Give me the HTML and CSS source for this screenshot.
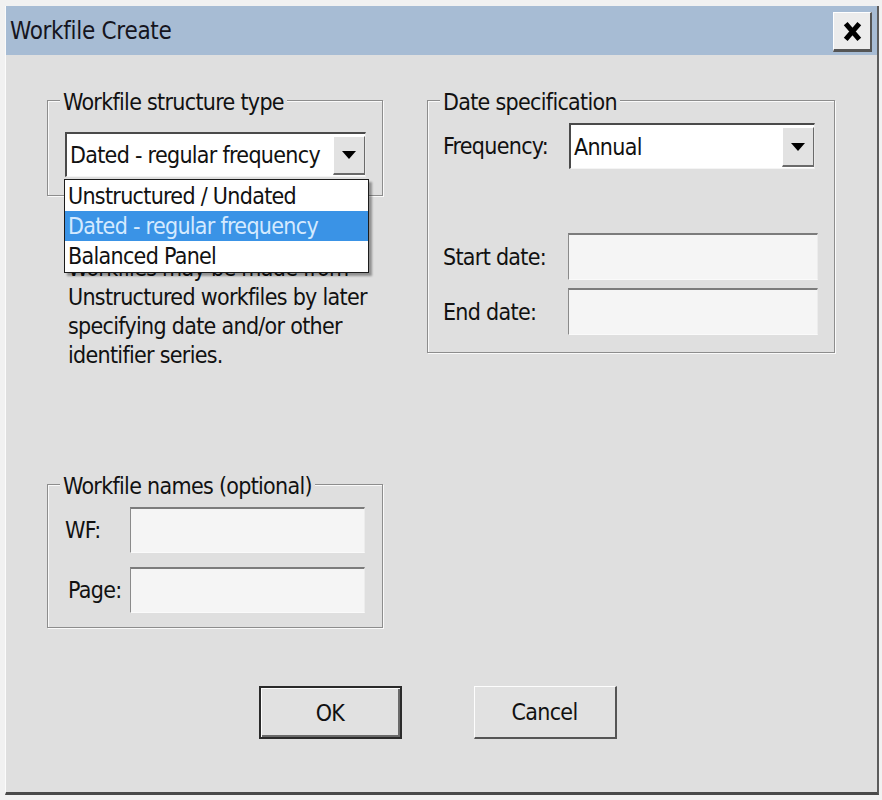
FILE: index.html
```html
<!DOCTYPE html>
<html>
<head>
<meta charset="utf-8">
<link rel="stylesheet" href="styles.css">
</head>
<body>
<div class="window">
  <div class="titlebar">
    <span class="title">Workfile Create</span>
    <div class="close"><svg viewBox="0 0 20 22" width="21" height="23"><path d="M3.5 3.5 L16.5 18.5 M16.5 3.5 L3.5 18.5" stroke="#000" stroke-width="4.8" fill="none"/></svg></div>
  </div>
  <div class="main">
    <div class="col-left">
      <div class="group g-structure">
        <div class="legend">Workfile structure type</div>
        <div class="combo-wrap">
          <div class="combo combo-structure"><span class="combo-text">Dated - regular frequency</span><span class="combo-btn"><span class="tri"></span></span></div>
          <ul class="dropdown">
            <li class="item">Unstructured / Undated</li>
            <li class="item item-selected">Dated - regular frequency</li>
            <li class="item">Balanced Panel</li>
          </ul>
        </div>
      </div>
      <div class="desc">
        <div class="desc-line">Workfiles may be made from</div>
        <div class="desc-line">Unstructured workfiles by later</div>
        <div class="desc-line">specifying date and/or other</div>
        <div class="desc-line">identifier series.</div>
      </div>
      <div class="group g-names">
        <div class="legend">Workfile names (optional)</div>
        <div class="names-grid">
          <span class="label">WF:</span><div class="input input-names"></div>
          <span class="label label-page">Page:</span><div class="input input-names"></div>
        </div>
      </div>
    </div>
    <div class="col-right">
      <div class="group g-date">
        <div class="legend">Date specification</div>
        <div class="freq-row">
          <span class="label">Frequency:</span>
          <div class="combo combo-freq"><span class="combo-text">Annual</span><span class="combo-btn"><span class="tri"></span></span></div>
        </div>
        <div class="dates-grid">
          <span class="label">Start date:</span><div class="input input-date"></div>
          <span class="label">End date:</span><div class="input input-date"></div>
        </div>
      </div>
    </div>
  </div>
  <div class="buttons">
    <div class="btn btn-default">OK</div>
    <div class="btn">Cancel</div>
  </div>
</div>
</body>
</html>
```
FILE: styles.css
```css
html, body {
  margin: 0;
  padding: 0;
}
body {
  background: #f1f1f1;
  font-family: "DejaVu Sans Condensed", "DejaVu Sans", sans-serif;
  font-stretch: semi-condensed;
  font-size: 23px;
  letter-spacing: -0.7px;
  color: #111;
}
.window {
  margin: 6px 0 0 5px;
  width: 874px;
  height: 789px;
  box-sizing: border-box;
  background: #dfdfdf;
  border-left: 1px solid #fbfbfb;
  border-right: 2px solid #5c5c5c;
  border-bottom: 3px solid #4a4a4a;
}
.titlebar {
  height: 49px;
  background: #a7bcd4;
  display: flex;
  align-items: center;
  justify-content: space-between;
  padding: 0 5px 0 4px;
}
.title {
  font-size: 24px;
  letter-spacing: -0.3px;
  color: #151520;
}
.close {
  width: 39px;
  height: 40px;
  margin-top: 3px;
  box-sizing: border-box;
  background: #ececec;
  border-top: 1px solid #ffffff;
  border-left: 1px solid #ffffff;
  border-right: 2px solid #555;
  border-bottom: 3px solid #555;
  display: flex;
  align-items: center;
  justify-content: center;
}
.main {
  display: flex;
  gap: 44px;
  padding: 45px 0 0 41px;
}
.col-left {
  width: 336px;
}
.col-right {
  width: 408px;
}
.group {
  border: 1px solid #8d8d8d;
  box-shadow: 1px 1px 0 #fafafa, inset 1px 1px 0 #fafafa;
}
.legend {
  margin: -11px 0 0 -5px;
  padding: 0 3px;
  background: #dfdfdf;
  width: max-content;
  height: 24px;
  line-height: 24px;
  position: relative;
}
.g-date .legend {
  margin-left: -3px;
}
.g-structure {
  padding: 0 16px 18px 17px;
}
.combo-wrap {
  margin-top: 18px;
  position: relative;
}
.combo {
  box-sizing: border-box;
  display: flex;
  align-items: stretch;
  background: #fff;
  border-top: 2px solid #4a4a4a;
  border-left: 2px solid #4a4a4a;
  border-right: 1px solid #e8e8e8;
  border-bottom: 1px solid #f4f4f4;
}
.combo-structure {
  width: 301px;
  height: 45px;
}
.combo-freq {
  width: 246px;
  height: 46px;
}
.combo-text {
  flex: 1;
  display: flex;
  align-items: center;
  padding-left: 3px;
}
.combo-btn {
  width: 32px;
  margin: 2px 0 1px 0;
  box-sizing: border-box;
  background: #e2e2e2;
  border-top: 1px solid #fff;
  border-left: 1px solid #fff;
  border-right: 1px solid #6a6a6a;
  border-bottom: 2px solid #6a6a6a;
  display: flex;
  align-items: center;
  justify-content: center;
}
.tri {
  width: 0;
  height: 0;
  border-left: 7px solid transparent;
  border-right: 7px solid transparent;
  border-top: 8px solid #000;
}
.dropdown {
  position: absolute;
  z-index: 2;
  top: 47px;
  left: -1px;
  width: 305px;
  box-sizing: border-box;
  margin: 0;
  padding: 1px 0;
  list-style: none;
  background: #fff;
  border: 1px solid #1c1c1c;
  box-shadow: 3px 3px 2px rgba(0, 0, 0, 0.35);
}
.item {
  height: 30px;
  line-height: 30px;
  padding-left: 3px;
  white-space: nowrap;
}
.item-selected {
  background: #3a93e6;
  color: #d4eaff;
}
.desc {
  margin-top: 58px;
  padding-left: 21px;
  line-height: 29px;
}
.desc-line {
  white-space: nowrap;
}
.g-names {
  margin-top: 114px;
  padding: 0 17px 14px 17px;
}
.names-grid {
  display: grid;
  grid-template-columns: 65px 235px;
  row-gap: 14px;
  margin-top: 9px;
  align-items: center;
}
.label-page {
  padding-left: 3px;
}
.input {
  box-sizing: border-box;
  background: #f5f5f5;
  border-top: 2px solid #7c7c7c;
  border-left: 1px solid #8a8a8a;
  border-right: 1px solid #ececec;
  border-bottom: 1px solid #fafafa;
}
.input-names {
  height: 46px;
}
.g-date {
  padding: 0 16px 17px 15px;
}
.freq-row {
  display: grid;
  grid-template-columns: 126px 246px;
  align-items: center;
  margin-top: 9px;
}
.dates-grid {
  display: grid;
  grid-template-columns: 125px 250px;
  row-gap: 8px;
  align-items: center;
  margin-top: 64px;
}
.input-date {
  height: 47px;
}
.buttons {
  display: flex;
  justify-content: center;
  gap: 72px;
  margin-top: 58px;
  padding-right: 8px;
}
.btn {
  width: 143px;
  height: 53px;
  box-sizing: border-box;
  background: #e1e1e1;
  display: flex;
  align-items: center;
  justify-content: center;
  border-top: 1px solid #fdfdfd;
  border-left: 1px solid #fdfdfd;
  border-right: 2px solid #555;
  border-bottom: 2px solid #555;
}
.btn-default {
  border: 2px solid #2a2a2a;
  box-shadow: inset 1px 1px 0 #fdfdfd, inset -2px -2px 0 #6a6a6a;
}
```
